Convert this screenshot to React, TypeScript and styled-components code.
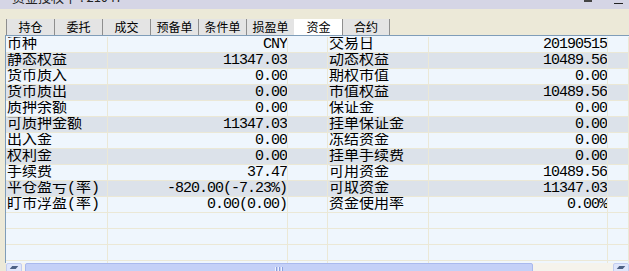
import React from 'react';
import styled, { createGlobalStyle } from 'styled-components';

const GlobalStyle = createGlobalStyle`
  html, body {
    margin: 0;
    padding: 0;
    background: #ece9d8;
  }
`;

const SWindow = styled.div`
  width: 629px;
  height: 271px;
  overflow: hidden;
  display: flex;
  flex-direction: column;
  background: #ece9d8;
  font-family: 'Noto Sans CJK SC', sans-serif;
`;

const STitleBar = styled.div`
  height: 9px;
  flex: none;
  overflow: hidden;
  background: #d5d5e5;
  display: flex;
  justify-content: space-between;
  padding: 0 6px 0 12px;
`;

const STitleText = styled.span`
  margin-top: -10px;
  font-size: 13px;
  line-height: 14px;
  color: #222;
`;

const STitleIcons = styled.div`
  display: flex;
  align-items: flex-start;
  gap: 22px;
`;

const SPin = styled.div`
  width: 8px;
  height: 2px;
  background: #444;
`;

const SDash = styled.div`
  width: 9px;
  height: 1px;
  margin-top: 3px;
  background: #222;
`;

const STabStrip = styled.div`
  display: flex;
  height: 16px;
  margin-top: 10px;
  padding-left: 6px;
  flex: none;
`;

const STab = styled.div<{ $active?: boolean; $last?: boolean }>`
  width: 48px;
  box-sizing: border-box;
  display: flex;
  align-items: center;
  justify-content: center;
  font-size: 12px;
  line-height: 16px;
  color: #000;
  background: ${(p) => (p.$active ? '#ffffff' : '#e4e4e4')};
  border-left: 1px solid ${(p) => (p.$active ? 'transparent' : '#8e8e8e')};
  border-right: ${(p) => (p.$last ? '1px solid #8e8e8e' : 'none')};
`;

const SPanel = styled.div`
  margin-left: 5px;
  border-top: 1px solid #7f9db9;
  border-left: 1px solid #7f9db9;
  background: #eff6fd;
  padding-top: 1px;
  height: 226px;
  overflow: hidden;
  flex: none;
`;

const SRow = styled.div<{ $dark?: boolean }>`
  display: grid;
  grid-template-columns: 102px 180px 40px 101px 179px 1fr;
  height: 16px;
  box-sizing: border-box;
  border-bottom: 1px solid #ebe8d6;
  background: ${(p) => (p.$dark ? '#dce2ea' : '#eff6fd')};
`;

const SCell = styled.div`
  box-sizing: border-box;
  border-right: 1px solid #ebe8d6;
  overflow: hidden;
  white-space: nowrap;
`;

const SLabel = styled(SCell)`
  padding-left: 1px;
  font-family: 'Liberation Mono', 'Noto Sans CJK SC', monospace;
  font-size: 15px;
  line-height: 15px;
  color: #000;
`;

const SValue = styled(SCell)`
  text-align: right;
  padding-right: 0px;
  font-family: 'Liberation Mono', monospace;
  font-size: 15px;
  letter-spacing: -1px;
  line-height: 15px;
  color: #000;
`;

const SScrollBar = styled.div`
  display: flex;
  height: 17px;
  margin-left: 6px;
  flex: none;
  background: #f5f3ec;
`;

const SScrollBtn = styled.div`
  width: 16px;
  box-sizing: border-box;
  border: 1px solid #c3cdf0;
  border-radius: 2px;
  background: #dfe6fb;
  display: flex;
  justify-content: center;
  padding-top: 2px;
`;

const SArrow = styled.div`
  width: 6px;
  height: 3px;
  background: #4d6185;
  transform: skewX(-40deg);
`;

const SThumb = styled.div`
  margin-left: 3px;
  width: 508px;
  box-sizing: border-box;
  border: 1px solid #a9b9ee;
  border-radius: 2px;
  background: #c4d0f7;
  display: flex;
  justify-content: center;
  gap: 1px;
  padding-top: 3px;
`;

const SGrip = styled.div`
  width: 1px;
  height: 5px;
  background: #eef2fd;
  border-right: 1px solid #8c9fdc;
`;

const STrack = styled.div`
  flex: 1;
`;

const tabs = ['持仓', '委托', '成交', '预备单', '条件单', '损盈单', '资金', '合约'];

type Pair = [string, string];

const rows: { left: Pair; right: Pair }[] = [
  { left: ['币种', 'CNY'], right: ['交易日', '20190515'] },
  { left: ['静态权益', '11347.03'], right: ['动态权益', '10489.56'] },
  { left: ['货币质入', '0.00'], right: ['期权市值', '0.00'] },
  { left: ['货币质出', '0.00'], right: ['市值权益', '10489.56'] },
  { left: ['质押余额', '0.00'], right: ['保证金', '0.00'] },
  { left: ['可质押金额', '11347.03'], right: ['挂单保证金', '0.00'] },
  { left: ['出入金', '0.00'], right: ['冻结资金', '0.00'] },
  { left: ['权利金', '0.00'], right: ['挂单手续费', '0.00'] },
  { left: ['手续费', '37.47'], right: ['可用资金', '10489.56'] },
  { left: ['平仓盈亏(率)', '-820.00(-7.23%)'], right: ['可取资金', '11347.03'] },
  { left: ['盯市浮盈(率)', '0.00(0.00)'], right: ['资金使用率', '0.00%'] },
];

const emptyRows = 4;

const App = () => {
  return (
    <>
      <GlobalStyle />
      <SWindow>
        <STitleBar>
          <STitleText>资金授权中 : 21047</STitleText>
          <STitleIcons>
            <SPin />
            <SDash />
          </STitleIcons>
        </STitleBar>
        <STabStrip>
          {tabs.map((t, i) => (
            <STab key={t} $active={t === '资金'} $last={i === tabs.length - 1}>
              {t}
            </STab>
          ))}
        </STabStrip>
        <SPanel>
          {rows.map((r, i) => (
            <SRow key={r.left[0]} $dark={i % 2 === 1}>
              <SLabel>{r.left[0]}</SLabel>
              <SValue>{r.left[1]}</SValue>
              <SCell />
              <SLabel>{r.right[0]}</SLabel>
              <SValue>{r.right[1]}</SValue>
              <SCell />
            </SRow>
          ))}
          {Array.from({ length: emptyRows }).map((_, i) => (
            <SRow key={'e' + i}>
              <SCell />
              <SCell />
              <SCell />
              <SCell />
              <SCell />
              <SCell />
            </SRow>
          ))}
        </SPanel>
        <SScrollBar>
          <SScrollBtn>
            <SArrow />
          </SScrollBtn>
          <SThumb>
            <SGrip />
            <SGrip />
            <SGrip />
          </SThumb>
          <STrack />
          <SScrollBtn>
            <SArrow />
          </SScrollBtn>
        </SScrollBar>
      </SWindow>
    </>
  );
};

export default App;
